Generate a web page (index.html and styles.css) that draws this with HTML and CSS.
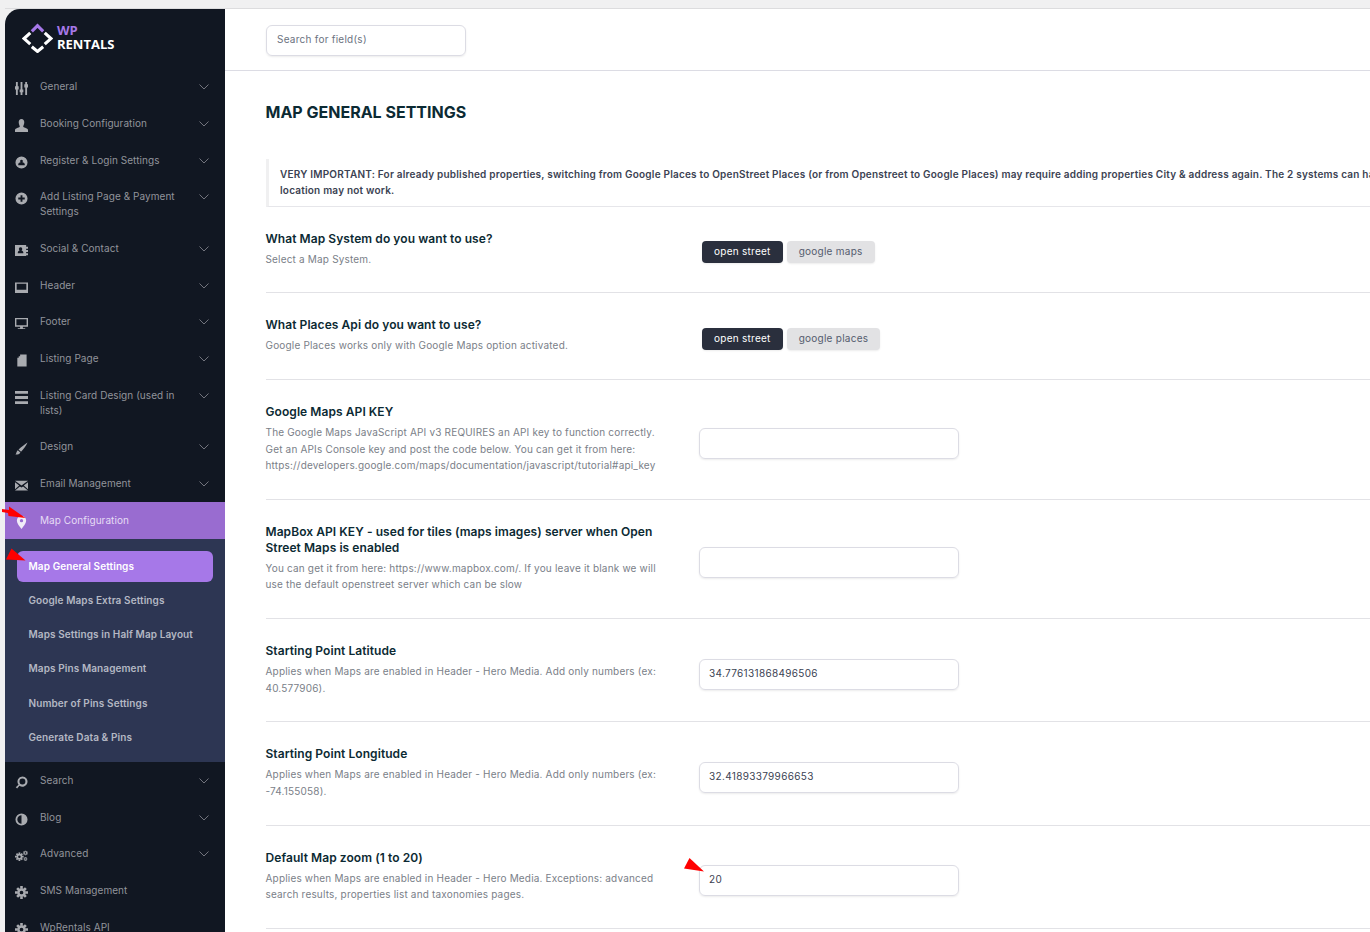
FILE: index.html
```html
<!DOCTYPE html>
<html lang="en">
<head>
<meta charset="utf-8">
<title>Map General Settings</title>
<link rel="stylesheet" href="styles.css">
</head>
<body>
<svg class="defs" width="0" height="0" aria-hidden="true">
  <symbol id="chev" viewBox="0 0 10 6"><path d="M.5.5 5 5 9.500.5" fill="none" stroke="currentColor" stroke-width=".8"/></symbol>
  <symbol id="cog" viewBox="0 0 14 14"><circle cx="7" cy="7" r="3.300" fill="none" stroke="currentColor" stroke-width="2.600"/><path d="M5.600 0h2.800v3H5.600zM5.600 11h2.800v3H5.600zM0 5.600h3v2.800H0zM11 5.600h3v2.800h-3zM1.300 3.300l2-2 2 2-2 2zM8.700 3.300l2-2 2 2-2 2zM1.300 10.700l2-2 2 2-2 2zM8.700 10.700l2-2 2 2-2 2z" fill="currentColor"/></symbol>
</svg>
<div class="app">
  <aside class="sidebar">
    <div class="logo">
      <svg class="logo-mark" viewBox="0 0 30 30" aria-hidden="true">
        <path d="M9.500 9 15 3.500 20.500 9" fill="none" stroke="#a678e8" stroke-width="3"/>
        <path d="M8 10.500 2 16l6 5.500M22 10.500l6 5.500-6 5.500M9.500 24l5.500 4.500 5.500-4.500" fill="none" stroke="#fff" stroke-width="3"/>
      </svg>
      <div class="logo-text"><span class="logo-wp">WP</span><span class="logo-name">RENTALS</span></div>
    </div>
    <nav>
      <a class="nav-row">
        <svg class="ico" viewBox="0 0 14 14"><path d="M1 0h2v4.500h1V8H3v6H1V8H0V4.500h1zM6 0h2v8h1v3H8v3H6v-3H5V8h1zM11 0h2v2.500h1V6h-1v8h-2V6h-1V2.500h1z" fill="currentColor"/></svg>
        <span class="nav-label">General</span><svg class="chev"><use href="#chev"/></svg>
      </a>
      <a class="nav-row">
        <svg class="ico" viewBox="0 0 14 14"><path d="M7 0c2 0 3 1.500 3 3.500S9 7 8.800 8c0 1 4.200 1.500 5.200 3.500V14H0v-2.500C1 9.500 5.200 9 5.200 8 5 7 4 5.500 4 3.500S5 0 7 0z" fill="currentColor"/></svg>
        <span class="nav-label">Booking Configuration</span><svg class="chev"><use href="#chev"/></svg>
      </a>
      <a class="nav-row">
        <svg class="ico" viewBox="0 0 14 14"><path fill-rule="evenodd" d="M7 .5a6.500 6.500 0 1 1 0 13 6.500 6.500 0 0 1 0-13zM7 4a1.500 1.500 0 0 0-1 2.600C5 7 4 7.300 3.500 8.500V10h7V8.500C10 7.300 9 7 8 6.600A1.500 1.500 0 0 0 7 4z" fill="currentColor"/></svg>
        <span class="nav-label">Register &amp; Login Settings</span><svg class="chev"><use href="#chev"/></svg>
      </a>
      <a class="nav-row">
        <svg class="ico" viewBox="0 0 14 14"><path fill-rule="evenodd" d="M7 .5a6.500 6.500 0 1 1 0 13 6.500 6.500 0 0 1 0-13zM6 3.500V6H3.500v2H6v2.500h2V8h2.500V6H8V3.500z" fill="currentColor"/></svg>
        <span class="nav-label">Add Listing Page &amp; Payment Settings</span><svg class="chev"><use href="#chev"/></svg>
      </a>
      <a class="nav-row">
        <svg class="ico" viewBox="0 0 14 14"><path fill-rule="evenodd" d="M0 1h12v2h2v2h-2v1.500h2v2h-2V10h2v2h-2v1H0zM6 3.500a1.800 1.800 0 0 0-1 3.300C4 7.300 3 8 3 9.500V10h6v-.5c0-1.500-1-2.200-2-2.700a1.800 1.800 0 0 0-1-3.300z" fill="currentColor"/></svg>
        <span class="nav-label">Social &amp; Contact</span><svg class="chev"><use href="#chev"/></svg>
      </a>
      <a class="nav-row">
        <svg class="ico" viewBox="0 0 14 14"><path fill-rule="evenodd" d="M0 1.500h14v11.500H0zM1.800 3v6.500h10.400V3z" fill="currentColor"/></svg>
        <span class="nav-label">Header</span><svg class="chev"><use href="#chev"/></svg>
      </a>
      <a class="nav-row">
        <svg class="ico" viewBox="0 0 14 14"><path fill-rule="evenodd" d="M0 1h14v9.500H8.500V12H11v1H3v-1h2.500v-1.500H0zM1.500 2.500V9h11V2.500z" fill="currentColor"/></svg>
        <span class="nav-label">Footer</span><svg class="chev"><use href="#chev"/></svg>
      </a>
      <a class="nav-row">
        <svg class="ico" viewBox="0 0 14 14"><path d="M5.500.5h7v13h-10V4h1.500V2.500h1.500z" fill="currentColor"/></svg>
        <span class="nav-label">Listing Page</span><svg class="chev"><use href="#chev"/></svg>
      </a>
      <a class="nav-row">
        <svg class="ico" viewBox="0 0 14 14"><path d="M0 0h14v3H0zM0 5.500h14v3H0zM0 11h14v3H0z" fill="currentColor"/></svg>
        <span class="nav-label">Listing Card Design (used in lists)</span><svg class="chev"><use href="#chev"/></svg>
      </a>
      <a class="nav-row">
        <svg class="ico" viewBox="0 0 14 14"><path d="M13.500.5C12 4 9 8 6.500 10.500L3.800 8C7 5 10.500 2.500 13.500.5zM3 8.800l2.800 2.400C5 13 2 13.800.5 13.500 1.500 12.500 1.500 10 3 8.800z" fill="currentColor"/></svg>
        <span class="nav-label">Design</span><svg class="chev"><use href="#chev"/></svg>
      </a>
      <a class="nav-row">
        <svg class="ico" viewBox="0 0 14 14"><path d="M0 2h14L7 7zM0 3.500 4.500 7 0 11zM14 3.500 9.500 7l4.500 4zM0 12.500 5.300 8 7 9.200 8.700 8l5.300 4.500z" fill="currentColor"/></svg>
        <span class="nav-label">Email Management</span><svg class="chev"><use href="#chev"/></svg>
      </a>
      <a class="nav-row nav-row-open">
        <svg class="ico" viewBox="0 0 14 14"><path fill-rule="evenodd" d="M7 0a5 5 0 0 1 5 5c0 3-3 6-5 9-2-3-5-6-5-9a5 5 0 0 1 5-5zm0 3.200a1.800 1.800 0 1 0 0 3.600 1.800 1.800 0 0 0 0-3.600z" fill="currentColor"/></svg>
        <span class="nav-label">Map Configuration</span>
      </a>
      <div class="submenu">
        <a class="sub-item sub-item-active">Map General Settings</a>
        <a class="sub-item">Google Maps Extra Settings</a>
        <a class="sub-item">Maps Settings in Half Map Layout</a>
        <a class="sub-item">Maps Pins Management</a>
        <a class="sub-item">Number of Pins Settings</a>
        <a class="sub-item">Generate Data &amp; Pins</a>
      </div>
      <a class="nav-row">
        <svg class="ico" viewBox="0 0 14 14"><path fill-rule="evenodd" d="M8 .5a5.500 5.500 0 1 1-3.200 10L2.300 13.500.8 12l3-2.700A5.500 5.500 0 0 1 8 .5zm0 2.300a3.200 3.200 0 1 0 0 6.400 3.200 3.200 0 0 0 0-6.400z" fill="currentColor"/></svg>
        <span class="nav-label">Search</span><svg class="chev"><use href="#chev"/></svg>
      </a>
      <a class="nav-row">
        <svg class="ico" viewBox="0 0 14 14"><path fill-rule="evenodd" d="M7 .5a6.500 6.500 0 1 1 0 13 6.500 6.500 0 0 1 0-13zm0 2a4.500 4.500 0 0 0 0 9z" fill="currentColor"/></svg>
        <span class="nav-label">Blog</span><svg class="chev"><use href="#chev"/></svg>
      </a>
      <a class="nav-row">
        <svg class="ico" viewBox="0 0 14 14"><use href="#cog" x="0" y="3.500" width="9.500" height="9.500"/><use href="#cog" x="8.500" y="1.500" width="5.500" height="5.500"/><use href="#cog" x="9" y="8.500" width="4.500" height="4.500"/></svg>
        <span class="nav-label">Advanced</span><svg class="chev"><use href="#chev"/></svg>
      </a>
      <a class="nav-row">
        <svg class="ico"><use href="#cog"/></svg>
        <span class="nav-label">SMS Management</span>
      </a>
      <a class="nav-row">
        <svg class="ico"><use href="#cog"/></svg>
        <span class="nav-label">WpRentals API</span>
      </a>
    </nav>
  </aside>
  <main class="main">
    <header class="topbar"><div class="search-box">Search for field(s)</div></header>
    <section class="content">
      <h1 class="page-title">MAP GENERAL SETTINGS</h1>
      <p class="notice">VERY IMPORTANT: For already published properties, switching from Google Places to OpenStreet Places (or from Openstreet to Google Places) may require adding properties City &amp; address again. The 2 systems can have different<br>location may not work.</p>

      <div class="field">
        <div class="field-info"><h2 class="field-title">What Map System do you want to use?</h2><p class="field-desc">Select a Map System.</p></div>
        <div class="field-control toggle-group"><span class="toggle toggle-on">open street</span><span class="toggle">google maps</span></div>
      </div>
      <div class="field">
        <div class="field-info"><h2 class="field-title">What Places Api do you want to use?</h2><p class="field-desc">Google Places works only with Google Maps option activated.</p></div>
        <div class="field-control toggle-group"><span class="toggle toggle-on">open street</span><span class="toggle">google places</span></div>
      </div>
      <div class="field">
        <div class="field-info"><h2 class="field-title">Google Maps API KEY</h2><p class="field-desc">The Google Maps JavaScript API v3 REQUIRES an API key to function correctly. Get an APIs Console key and post the code below. You can get it from here: https://developers.google.com/maps/documentation/javascript/tutorial#api_key</p></div>
        <div class="field-control"><div class="input"></div></div>
      </div>
      <div class="field">
        <div class="field-info"><h2 class="field-title">MapBox API KEY - used for tiles (maps images) server when Open Street Maps is enabled</h2><p class="field-desc">You can get it from here: https://www.mapbox.com/. If you leave it blank we will use the default openstreet server which can be slow</p></div>
        <div class="field-control"><div class="input"></div></div>
      </div>
      <div class="field">
        <div class="field-info"><h2 class="field-title">Starting Point Latitude</h2><p class="field-desc">Applies when Maps are enabled in Header - Hero Media. Add only numbers (ex: 40.577906).</p></div>
        <div class="field-control"><div class="input">34.776131868496506</div></div>
      </div>
      <div class="field">
        <div class="field-info"><h2 class="field-title">Starting Point Longitude</h2><p class="field-desc">Applies when Maps are enabled in Header - Hero Media. Add only numbers (ex: -74.155058).</p></div>
        <div class="field-control"><div class="input">32.41893379966653</div></div>
      </div>
      <div class="field">
        <div class="field-info"><h2 class="field-title">Default Map zoom (1 to 20)</h2><p class="field-desc">Applies when Maps are enabled in Header - Hero Media. Exceptions: advanced search results, properties list and taxonomies pages.</p></div>
        <div class="field-control"><div class="input">20</div></div>
      </div>
    </section>
  </main>
</div>
<svg class="arrows" width="1370" height="932" aria-hidden="true">
  <path d="M2 509 9 510 9 506.500 25.500 518 8.500 516 8 513 2 512z" fill="#f00"/>
  <path d="M6 559.500 11.500 548.500 25.500 560.500z" fill="#f00"/>
  <path d="M684 868.500 689.500 858 704 871.500z" fill="#f00"/>
</svg>
</body>
</html>
```

FILE: styles.css
```css
* { box-sizing: border-box; }
html, body { height: 100%; }
body {
  margin: 0;
  height: 932px;
  overflow: hidden;
  background: #f0f0f1;
  font-family: Inter, "Liberation Sans", sans-serif;
  position: relative;
}
.defs { position: absolute; }
.arrows { position: absolute; left: 0; top: 0; pointer-events: none; }
.app {
  display: flex;
  margin: 8px 0 0 5px;
  height: 924px;
  border-top: 1px solid #dcdcde;
}
.sidebar {
  flex: 0 0 220px;
  width: 220px;
  background: #111722;
  border-top-left-radius: 15px;
  overflow: hidden;
}
.logo {
  display: flex;
  align-items: center;
  height: 59px;
  padding: 0 0 3px 16.500px;
  gap: 4.500px;
}
.logo-mark { width: 31px; height: 31px; }
.logo-text { display: flex; flex-direction: column; font-family: "Open Sans", sans-serif; font-weight: 700; font-size: 13px; line-height: 14px; }
.logo-wp { color: #a678e8; }
.logo-name { color: #fff; }
.nav-row {
  display: flex;
  align-items: flex-start;
  padding: 11px 16px 11px 10px;
  color: #92949b;
  font-size: 10px;
  line-height: 14.750px;
  letter-spacing: .06px;
}
.ico { flex: 0 0 13px; width: 13px; height: 13px; margin: 3px 12px -3px 0; color: #a9abb0; }
.nav-label { width: 145px; }
.chev { flex: 0 0 10px; width: 10px; height: 6px; margin: 5px 0 0 14px; color: #8b8d94; }
.nav-row-open { background: #996cd0; color: #e6dcf5; }
.nav-row-open .ico { color: #f1ecf8; }
.submenu {
  background: #2d3653;
  padding: 12px 12px 9px;
  display: flex;
  flex-direction: column;
  gap: 3.300px;
}
.sub-item {
  height: 31px;
  line-height: 30px;
  padding-left: 11.500px;
  border-radius: 6px;
  font-size: 10px;
  font-weight: 600;
  letter-spacing: .1px;
  color: #b4b8c4;
}
.sub-item-active { background: #a678e8; color: #fff; }
.main { flex: 1; min-width: 0; background: #fff; overflow: hidden; }
.topbar { height: 62px; padding: 16px 0 0 41px; border-bottom: 1px solid #dcdce4; }
.search-box {
  width: 200px;
  height: 31px;
  border: 1px solid #dcdce4;
  border-radius: 6px;
  box-shadow: 0 1px 2px rgba(0,0,0,.08);
  padding: 0 10px;
  font-size: 10px;
  line-height: 27px;
  letter-spacing: .25px;
  color: #6b7280;
}
.content { padding: 0 0 0 40.500px; }
.page-title {
  margin: 0;
  padding-top: 30px;
  height: 88px;
  font-size: 16px;
  line-height: 22px;
  font-weight: 700;
  color: #0c2a33;
}
.notice {
  margin: 0;
  height: 47.500px;
  padding: 7px 0 0 11.500px;
  border-left: 3px solid #f0f0f1;
  border-bottom: 1px solid #e6e6ea;
  font-size: 10px;
  line-height: 16px;
  font-weight: 600;
  color: #3b4252;
  white-space: nowrap;
  overflow: hidden;
  letter-spacing: .21px;
}
.field {
  display: flex;
  align-items: center;
  padding: 24px 0 25.100px;
  border-bottom: 1px solid #e2e2e6;
}
.field-info { flex: 0 0 395px; width: 395px; }
.field-title { margin: 0; font-size: 12px; line-height: 15.600px; font-weight: 600; letter-spacing: .07px; color: #0c2a33; }
.field-desc { margin: 4.500px 0 0; font-size: 10px; line-height: 16.600px; letter-spacing: .18px; color: #7a8088; }
.field-control { margin-left: 38.500px; padding-top: 9px; }
.toggle-group { display: flex; gap: 4px; margin-left: 41.500px; padding-top: 7px; }
.toggle {
  height: 22px;
  padding: 0 12px;
  border-radius: 4px;
  background: #e2e2e4;
  box-shadow: 0 1px 2px rgba(0,0,0,.08);
  font-size: 10px;
  line-height: 21px;
  letter-spacing: .26px;
  color: #555c6e;
}
.toggle-on { background: #2a2f3d; color: #fff; }
.input {
  width: 260px;
  height: 31px;
  border: 1px solid #dcdce4;
  border-radius: 6px;
  box-shadow: 0 1px 2px rgba(0,0,0,.08);
  padding: 0 9px;
  font-size: 10px;
  line-height: 27px;
  letter-spacing: .33px;
  color: #3b4252;
}
```
